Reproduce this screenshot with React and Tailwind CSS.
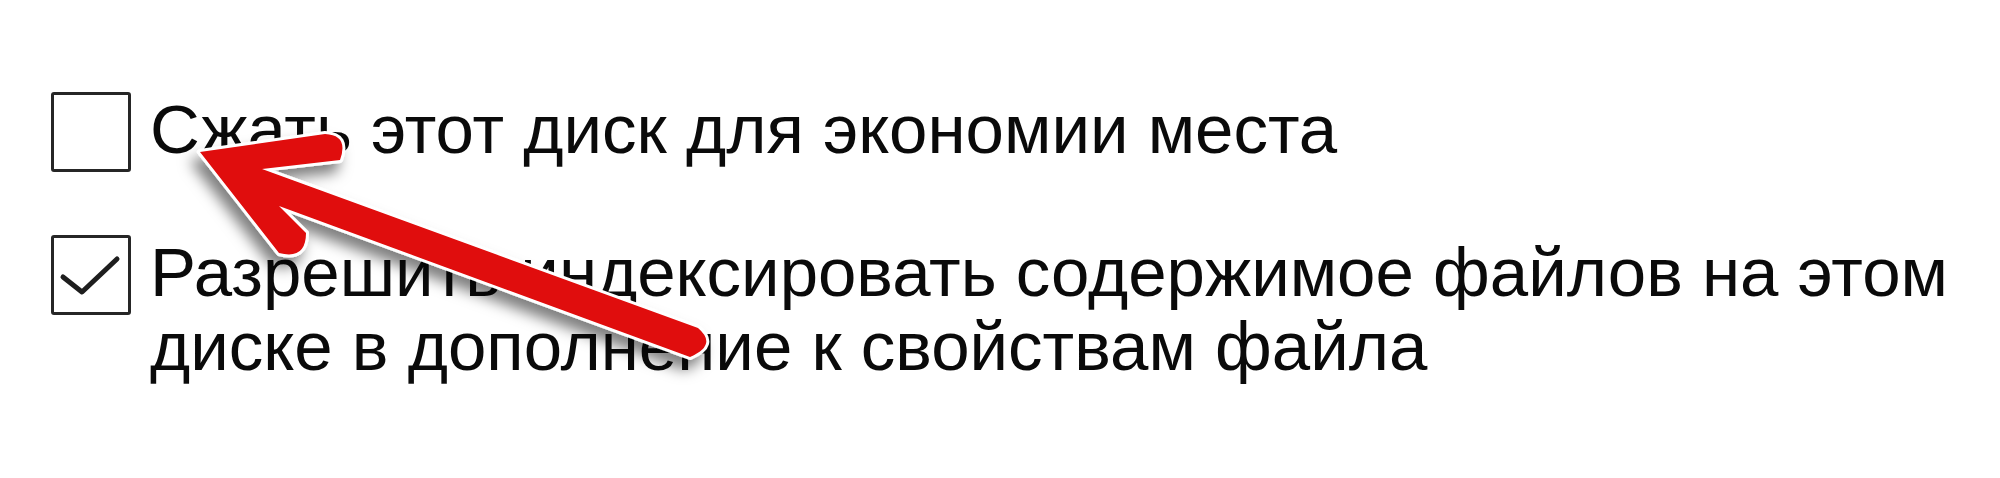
import React from "react";

function Box({ checked }) {
  return (
    <div className="relative w-[80px] h-[80px] shrink-0 border-[3px] border-[#262626] rounded-[3px] bg-white">
      {checked && (
        <svg className="absolute left-[-3px] top-[-3px]" width="80" height="80" viewBox="0 0 80 80">
          <path d="M12 42 L31 57 L66 24" fill="none" stroke="#1e1e1e" strokeWidth="5" strokeLinecap="round" strokeLinejoin="round" />
        </svg>
      )}
    </div>
  );
}

function Pointer() {
  return (
    <svg className="absolute inset-0 pointer-events-none" width="2000" height="478" viewBox="0 0 2000 478">
      <defs>
        <filter id="arrowShade" x="-20%" y="-20%" width="140%" height="160%">
          <feDropShadow dx="-6" dy="10" stdDeviation="7" floodColor="#000" floodOpacity="0.5" />
        </filter>
      </defs>
      <path
        d="M200 152 L325 134 Q349 135 340 160 L262 169 L698 328 Q718 345 690 357 L279 206 L306 233 Q306 260 279 253 Z"
        fill="#e00a0a"
        stroke="#ffffff"
        strokeWidth="6"
        strokeLinejoin="round"
        paintOrder="stroke"
        filter="url(#arrowShade)"
      />
    </svg>
  );
}

export default function App() {
  return (
    <div className="relative w-[2000px] h-[478px] bg-white overflow-hidden">
      <div
        className="flex flex-col gap-[63px] pl-[51px] pt-[92px] text-[69px] leading-[74px] text-[#0a0a0a]"
        style={{ fontFamily: '"Liberation Sans", Arial, sans-serif' }}
      >
        <div className="flex items-start gap-[19px]">
          <Box checked={false} />
          <div className="mt-[1px] w-[1830px]">Сжать этот диск для экономии места</div>
        </div>
        <div className="flex items-start gap-[19px]">
          <Box checked={true} />
          <div className="mt-[1px] w-[1830px]">
            Разрешить индексировать содержимое файлов на этом диске в дополнение к свойствам файла
          </div>
        </div>
      </div>
      <Pointer />
    </div>
  );
}
